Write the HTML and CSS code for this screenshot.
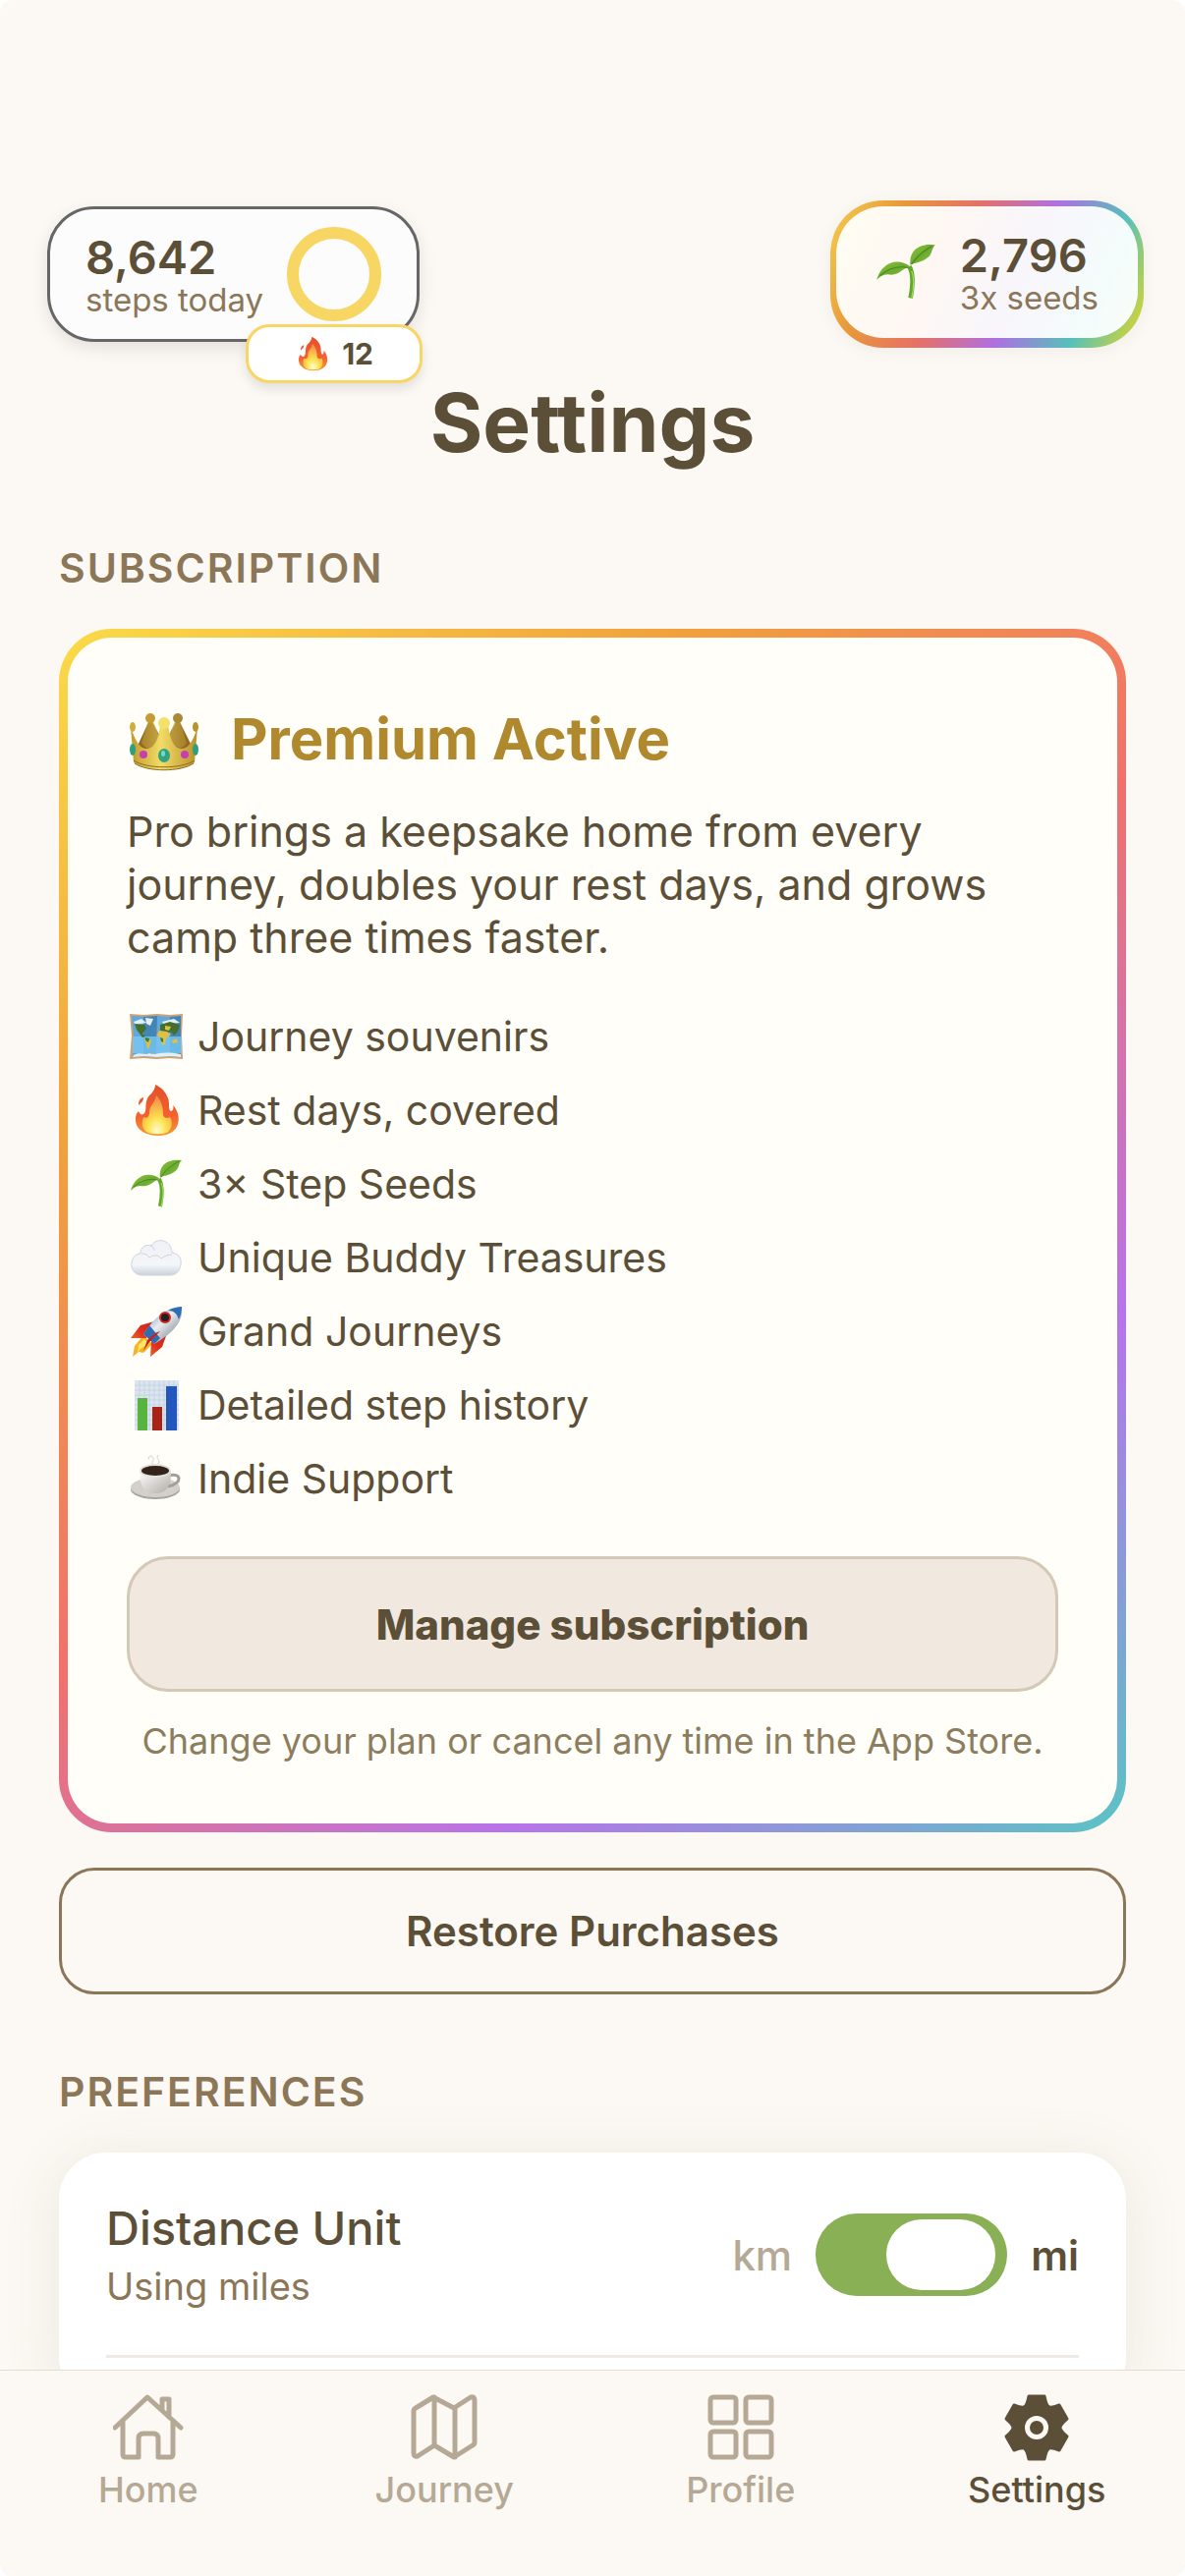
FILE: index.html
```html
<!DOCTYPE html>
<html lang="en">
<head>
    <meta charset="UTF-8">
    <meta name="viewport" content="width=device-width, initial-scale=1.0">
    <title>Settings</title>
    <link rel="stylesheet" href="styles.css">
</head>
<body>
    <!-- shared icons -->
    <svg class="icon-defs" aria-hidden="true">
        <defs>
            <linearGradient id="fireRed" x1="0" y1="0" x2="0" y2="1">
                <stop offset="0" stop-color="#e2502c"/>
                <stop offset="0.6" stop-color="#f4602f"/>
                <stop offset="1" stop-color="#f79a35"/>
            </linearGradient>
            <radialGradient id="fireCore" cx="0.5" cy="0.9" r="0.8">
                <stop offset="0" stop-color="#fffbd0"/>
                <stop offset="0.4" stop-color="#fde24e"/>
                <stop offset="1" stop-color="#f3924a"/>
            </radialGradient>
            <linearGradient id="leaf" x1="0" y1="0" x2="1" y2="1">
                <stop offset="0" stop-color="#8cc63c"/>
                <stop offset="0.5" stop-color="#6cab30"/>
                <stop offset="1" stop-color="#8fd148"/>
            </linearGradient>
            <linearGradient id="gold" x1="0" y1="0" x2="1" y2="0">
                <stop offset="0" stop-color="#c09a2e"/>
                <stop offset="0.45" stop-color="#f2dc66"/>
                <stop offset="1" stop-color="#b8902c"/>
            </linearGradient>
            <linearGradient id="cloudFill" x1="0" y1="0" x2="0" y2="1">
                <stop offset="0" stop-color="#eef1f5"/>
                <stop offset="0.7" stop-color="#f4f6f9"/>
                <stop offset="1" stop-color="#c9d1dc"/>
            </linearGradient>
            <linearGradient id="hull" x1="0" y1="0" x2="1" y2="1">
                <stop offset="0" stop-color="#3f7cc0"/>
                <stop offset="0.45" stop-color="#e9edf0"/>
                <stop offset="1" stop-color="#5a6672"/>
            </linearGradient>
            <linearGradient id="fin" x1="0" y1="1" x2="1" y2="0">
                <stop offset="0" stop-color="#f8a52c"/>
                <stop offset="0.5" stop-color="#e0301e"/>
                <stop offset="1" stop-color="#b81a14"/>
            </linearGradient>
            <linearGradient id="cup" x1="0" y1="0" x2="1" y2="1">
                <stop offset="0" stop-color="#ffffff"/>
                <stop offset="1" stop-color="#b0aca4"/>
            </linearGradient>
        </defs>

        <symbol id="fire" viewBox="0 0 54 54">
            <path fill="url(#fireRed)" d="M26 1C35 5 41 14 40 23c0 3 1 5 2 5 2 0 3-3 2-6 5 5 7 13 5 19-2 8-10 12-20 12S10 49 7 42C5 36 6 31 9 28c1 3 3 4 5 3 4-3 1-9 4-16 2-4 8-7 8-14z"/>
            <path fill="#e8552f" d="M9 22c0-4 1-7 5-8 0 4-2 5-5 8z"/>
            <path fill="url(#fireCore)" d="M27 12c6 6 7 13 7 20 1 3 4 4 7 2 3 5 2 12-2 15-3 3-18 3-22 0-5-4-5-10-3-15 3 2 6 0 6-4 0-8 6-11 7-18z"/>
        </symbol>

        <symbol id="seedling" viewBox="0 0 54 54">
            <path fill="none" stroke="#62a82b" stroke-width="4" d="M30 22c4 7 3 18 1 28"/>
            <path fill="none" stroke="#a2df62" stroke-width="1" d="M32 26c3 7 2 15 0 24"/>
            <path fill="url(#leaf)" d="M1 34C5 19 19 13 31 22 24 23 21 31 11 29 6 29 3 32 1 34z"/>
            <path fill="url(#leaf)" d="M31 21C29 7 40 1 53 3c-4 3-2 9-8 12-5 4-11 3-14 6z"/>
            <path fill="none" stroke="#4b8520" stroke-width="1" d="M4 30c7-6 15-9 25-7M32 20c5-8 11-12 18-16"/>
        </symbol>

        <symbol id="crown" viewBox="0 0 72 60">
            <path fill="#8f6a24" d="M9 34L22 6l14 26L50 6l14 28-8 14H15z"/>
            <path fill="url(#gold)" d="M2 15C8 33 13 37 18 37c8 0 13-10 14-25h8c2 16 6 25 14 25 6 0 11-6 16-22L67 51C57 61 15 61 5 51z"/>
            <path fill="url(#gold)" d="M20 8h5l6 17c-3 6-5 9-9 11-4 1-7-1-9-5zM47 8h5l7 23c-3 5-6 6-10 4-4-3-6-6-8-11z" opacity="0.55"/>
            <circle cx="22" cy="6" r="5" fill="#c49c34"/>
            <circle cx="50" cy="6" r="5" fill="#a8893a"/>
            <circle cx="36" cy="11" r="6" fill="#f4e168"/>
            <ellipse cx="4" cy="15" rx="3" ry="5" fill="#d0ad3e"/>
            <ellipse cx="68" cy="15" rx="3" ry="5" fill="#b8942f"/>
            <path fill="none" stroke="#8d6b22" stroke-width="1" d="M5 49c13 9 49 9 62 0M6 52c13 9 47 9 60 0"/>
            <ellipse cx="36" cy="44" rx="6" ry="7" fill="#2fa384"/>
            <ellipse cx="35" cy="42" rx="2" ry="3" fill="#7bd8ba"/>
            <circle cx="15" cy="43" r="4" fill="#c73fae"/>
            <circle cx="57" cy="43" r="4" fill="#c73fae"/>
            <ellipse cx="4" cy="38" rx="3" ry="6" fill="#2f9e7f"/>
            <ellipse cx="68" cy="38" rx="3" ry="6" fill="#2f9e7f"/>
        </symbol>

        <symbol id="worldmap" viewBox="0 0 54 54">
            <path fill="#c9a27c" d="M0 4l14 1 14-1 13 1 13-1-1 22 1 24-14-1-13 1-13-1-14 1 2-24z"/>
            <path fill="#5da9dd" d="M2 6l12 1v40L3 48l1-22zM28 6l13 1v40l-14 1z"/>
            <path fill="#4286b8" d="M14 7l14-1-1 42-13-1zM41 7l11-1v42l-11-1z"/>
            <path fill="#7ccaf5" d="M3 27h50v17H3z" opacity="0.75"/>
            <path fill="#e5eef3" d="M4 12l8-3 5 4-11 2zM16 8l8 1-3 7-4-2zM33 12l12-3 6 4-16 2zM4 46c6-4 10 0 16-2 8 2 12-3 32 1v3l-11-1-14 1-13-1-11 1z"/>
            <path fill="#466f2c" d="M5 14l10 1 2 4-4 5 3 3-3 1-6-8zM31 15l10-3 10 3-2 7-4 4-3-4-5 2-6-3z"/>
            <path fill="#dcc04a" d="M30 21l8 1 4 3-5 4-1 6-3 1-2-8-4-2zM17 28l5 3-2 7-2 2-1-6-2-3zM36 16l6 1-2 4-4-1zM43 31l5-2 1 4-5 1z"/>
            <path fill="#3e7d31" d="M16 28l4 1-1 4-3-2zM31 28l3 1v4l-2-1z"/>
        </symbol>

        <symbol id="cloud" viewBox="0 0 54 54">
            <path fill="url(#cloudFill)" stroke="#ccd4df" stroke-width="1" d="M13 45C5 45 1 39 2 32c1-6 5-9 9-9 0-7 6-10 11-8 4-8 20-8 21 7 7 1 10 6 9 12-1 7-5 11-11 11z"/>
            <path fill="none" stroke="#cdd5e0" stroke-width="1" d="M12 23c4 0 6 1 8 4 4-3 9-3 12 1 4-3 8-4 11-4M21 15c3 1 4 3 4 5"/>
        </symbol>

        <symbol id="rocket" viewBox="0 0 54 54">
            <path fill="#f6b32a" d="M14 31l9 9-9 9-5-1-6 5 2-11z"/>
            <path fill="#ffe667" d="M15 35l4 5-8 5-3 4 1-8z"/>
            <path fill="url(#fin)" d="M25 17l-14 4L1 34l16 0zM38 29l-5 14-12 10 1-16z"/>
            <path fill="url(#hull)" d="M53 2c2 13-6 25-28 38L14 30C25 12 39 2 53 2z"/>
            <path fill="#2f6cb2" d="M53 2c0 5-1 9-3 13-2-6-5-9-11-9 5-3 10-4 14-4zM20 21l11 13-6 6-11-10z"/>
            <circle cx="36" cy="13" r="6" fill="#d9231a"/>
            <circle cx="36" cy="13" r="4" fill="#1c2127"/>
            <path fill="#c8201a" d="M31 27L20 38l-6 9 4-11 8-7z"/>
        </symbol>

        <symbol id="chart" viewBox="0 0 54 54">
            <path fill="#dce5ee" d="M5 2h45v51H5z"/>
            <path fill="none" stroke="#c4d4e3" stroke-width="1" d="M5 7h45M5 12h45M5 17h45M5 22h45M5 27h45M5 32h45M5 37h45M5 42h45M5 47h45M10 2v51M15 2v51M20 2v51M25 2v51M30 2v51M35 2v51M40 2v51M45 2v51"/>
            <path fill="#57b53f" d="M8 20h10v33H8z"/>
            <path fill="#a92318" d="M23 29h10v24H23z"/>
            <path fill="#2457bd" d="M37 8h11v45H37z"/>
        </symbol>

        <symbol id="coffee" viewBox="0 0 54 54">
            <ellipse cx="26" cy="38" rx="25" ry="10" fill="#a9a5a0"/>
            <ellipse cx="26" cy="36" rx="25" ry="10" fill="#d3d0cb"/>
            <path fill="none" stroke="#a29e98" stroke-width="3" d="M40 24c12-4 15 8-1 11"/>
            <path fill="url(#cup)" d="M10 19c0 17 6 23 16 23s17-6 16-23z"/>
            <ellipse cx="26" cy="19" rx="16" ry="7" fill="#e4e2de"/>
            <ellipse cx="26" cy="19" rx="14" ry="5" fill="#35231a"/>
            <path fill="none" stroke="#d2d1cf" stroke-width="1" d="M24 13c-4-4 3-4-1-8M29 12c3-4-3-5 0-9M20 7c-3 0 0-3 3-3"/>
        </symbol>
    </svg>

    <div class="screen">
        <main class="content">
            <header class="top-bar">
                <div class="steps-card">
                    <div>
                        <div class="stat-value">8,642</div>
                        <div class="stat-label">steps today</div>
                    </div>
                    <div class="ring"></div>
                    <div class="streak">
                        <svg class="streak-icon"><use href="#fire"/></svg>
                        <span>12</span>
                    </div>
                </div>
                <div class="seeds-border">
                    <div class="seeds-card">
                        <svg class="seeds-icon"><use href="#seedling"/></svg>
                        <div>
                            <div class="stat-value">2,796</div>
                            <div class="stat-label">3x seeds</div>
                        </div>
                    </div>
                </div>
            </header>

            <h1>Settings</h1>

            <section>
                <h2>Subscription</h2>
                <div class="premium-border">
                    <div class="premium-card">
                        <h3><svg class="crown-icon"><use href="#crown"/></svg>Premium Active</h3>
                        <p class="premium-text">Pro brings a keepsake home from every journey, doubles your rest days, and grows camp three times faster.</p>
                        <ul class="perks">
                            <li><svg class="perk-icon"><use href="#worldmap"/></svg>Journey souvenirs</li>
                            <li><svg class="perk-icon"><use href="#fire"/></svg>Rest days, covered</li>
                            <li><svg class="perk-icon"><use href="#seedling"/></svg>3× Step Seeds</li>
                            <li><svg class="perk-icon"><use href="#cloud"/></svg>Unique Buddy Treasures</li>
                            <li><svg class="perk-icon"><use href="#rocket"/></svg>Grand Journeys</li>
                            <li><svg class="perk-icon"><use href="#chart"/></svg>Detailed step history</li>
                            <li><svg class="perk-icon"><use href="#coffee"/></svg>Indie Support</li>
                        </ul>
                        <button class="manage-btn" type="button">Manage subscription</button>
                        <p class="premium-note">Change your plan or cancel any time in the App Store.</p>
                    </div>
                </div>
                <button class="restore-btn" type="button">Restore Purchases</button>
            </section>

            <section>
                <h2>Preferences</h2>
                <div class="pref-card">
                    <div class="pref-row">
                        <div>
                            <label class="pref-name" for="unitSwitch">Distance Unit</label>
                            <div class="pref-hint">Using miles</div>
                        </div>
                        <div class="unit-toggle">
                            <span class="unit">km</span>
                            <input type="checkbox" class="switch" id="unitSwitch" checked>
                            <span class="unit active">mi</span>
                        </div>
                    </div>
                </div>
            </section>
        </main>

        <nav class="tab-bar">
            <a href="#">
                <svg class="tab-icon" viewBox="0 0 72 68">
                    <path d="M2 34L35 3l34 31M10 28v33q0 3 3 3h13V45q0-5 5-5h10q5 0 5 5v19h12q3 0 3-3V28M50 15V5h7v18"/>
                </svg>
                Home
            </a>
            <a href="#">
                <svg class="tab-icon" viewBox="-3 0 72 68">
                    <path d="M22 3L4 14q-2 1-2 3v43q0 4 4 3l17-11 20 12 19-12q2-1 2-3V6q0-4-4-3L43 14zM23 3v49M44 14v50"/>
                </svg>
                Journey
            </a>
            <a href="#">
                <svg class="tab-icon" viewBox="-3 0 72 68">
                    <rect x="2" y="3" width="26" height="26" rx="3"/>
                    <rect x="38" y="3" width="26" height="26" rx="3"/>
                    <rect x="2" y="38" width="26" height="26" rx="3"/>
                    <rect x="38" y="38" width="26" height="26" rx="3"/>
                </svg>
                Profile
            </a>
            <a href="#" class="active">
                <svg class="tab-icon" viewBox="-3 0 72 68">
                    <path class="gear" d="M25 2h16q2 10 5 11 2 1 10-2l8 14q-7 6-7 9t7 9l-8 14q-8-3-10-2-3 1-5 11H25q-2-10-5-11-2-1-10 2L2 43q7-6 7-9t-7-9l8-14q8 3 10 2 3-1 5-11z"/>
                    <circle class="gear-ring" cx="33" cy="34" r="9.5"/>
                </svg>
                Settings
            </a>
        </nav>
    </div>
</body>
</html>
```
FILE: styles.css
```css
* {
    box-sizing: border-box;
}
body {
    margin: 0;
    background-color: #fff;
    color: #5c4f38;
    font-family: Inter, Roboto, sans-serif;
}
h1, h2, h3, p, ul {
    margin: 0;
    padding: 0;
}
button {
    display: block;
    width: 100%;
    color: #5c4f38;
    font-family: inherit;
    font-size: 42px;
    cursor: pointer;
}
.icon-defs {
    position: absolute;
    width: 0;
    height: 0;
}
.screen {
    display: flex;
    flex-direction: column;
    height: 100vh;
    background-color: #fcf9f4;
    border-radius: 12px;
    overflow: hidden;
}
.content {
    flex: 1;
    min-height: 0;
    overflow: hidden;
    padding: 204px 60px 0;
}

/* top stats */
.top-bar {
    display: flex;
    justify-content: space-between;
    align-items: center;
    margin: 0 -18px 0 -12px;
}
.steps-card {
    position: relative;
    display: flex;
    align-items: center;
    gap: 24px;
    height: 138px;
    padding: 0 36px;
    background-color: #fcfcfc;
    border: 3px solid #666;
    border-radius: 48px;
    box-shadow: 0 6px 18px rgba(0, 0, 0, 0.1);
}
.stat-value {
    font-size: 47px;
    font-weight: 600;
    line-height: 52px;
}
.stat-label {
    color: #8b7658;
    font-size: 33px;
    line-height: 34px;
}
.ring {
    width: 96px;
    height: 96px;
    border: 12px solid #f8d664;
    border-radius: 50%;
}
.streak {
    position: absolute;
    right: -6px;
    bottom: -45px;
    display: flex;
    justify-content: center;
    align-items: center;
    gap: 12px;
    width: 180px;
    height: 60px;
    background-color: #fff;
    border: 3px solid #f8d664;
    border-radius: 24px;
    box-shadow: 0 6px 12px rgba(0, 0, 0, 0.1);
    font-size: 30px;
    font-weight: 700;
}
.streak-icon {
    width: 36px;
    height: 36px;
}
.seeds-border {
    padding: 6px 6px 10px;
    background: linear-gradient(114deg, #f3cf4e, #e8983a 20%, #e57068 40%, #b06fe0 60%, #56c0bc 80%, #c4d244 95%);
    border-radius: 54px;
    box-shadow: 0 3px 18px rgba(0, 0, 0, 0.05);
}
.seeds-card {
    display: flex;
    align-items: center;
    gap: 24px;
    height: 134px;
    padding: 0 40px;
    background: linear-gradient(114deg, #fffdf2, #fef7f3 35%, #f8f6fc 60%, #f4fcfb 85%, #fafdf6);
    border-radius: 48px;
}
.seeds-icon {
    width: 62px;
    height: 62px;
}

h1 {
    margin-top: 29px;
    font-size: 82px;
    font-weight: 700;
    line-height: 96px;
    text-align: center;
}
h2 {
    margin: 72px 0 35px;
    color: #8b7658;
    font-size: 41px;
    font-weight: 600;
    line-height: 54px;
    letter-spacing: 2px;
    text-transform: uppercase;
}

/* premium */
.premium-border {
    padding: 9px;
    background: linear-gradient(140deg, #fadb48, #f2a03c 25%, #f0716c 50%, #b873ea 75%, #5ac4c4);
    border-radius: 54px;
}
.premium-card {
    padding: 60px;
    background-color: #fffef9;
    border-radius: 45px;
}
h3 {
    display: flex;
    align-items: center;
    gap: 30px;
    margin-bottom: 24px;
    color: #b0882e;
    font-size: 58px;
    font-weight: 700;
    line-height: 86px;
}
.crown-icon {
    width: 76px;
    height: 60px;
    margin-top: 6px;
}
.premium-text {
    font-size: 43px;
    line-height: 54px;
}
.perks {
    margin: 36px 0 42px;
    list-style: none;
}
.perks li {
    display: flex;
    align-items: center;
    gap: 14px;
    height: 75px;
    padding-left: 2px;
    font-size: 41px;
}
.perk-icon {
    width: 56px;
    height: 54px;
}
.manage-btn {
    height: 138px;
    background-color: #f1e8df;
    border: 3px solid #d4c8b6;
    border-radius: 42px;
    font-weight: 800;
}
.premium-note {
    margin-top: 26px;
    color: #8b7d5e;
    font-size: 36px;
    line-height: 48px;
    text-align: center;
}
.restore-btn {
    height: 129px;
    margin-top: 36px;
    background: none;
    border: 3px solid #8b7658;
    border-radius: 36px;
    font-weight: 600;
}

/* preferences */
.pref-card {
    padding: 48px;
    background-color: #fff;
    border-radius: 48px;
    box-shadow: 0 6px 60px rgba(92, 79, 56, 0.1);
}
.pref-row {
    display: flex;
    justify-content: space-between;
    align-items: center;
    padding-bottom: 46px;
    border-bottom: 3px solid #eeebe7;
}
.pref-name {
    display: block;
    margin-bottom: 6px;
    font-size: 47px;
    font-weight: 500;
    line-height: 58px;
}
.pref-hint {
    color: #8b7658;
    font-size: 38px;
    line-height: 48px;
}
.unit-toggle {
    display: flex;
    align-items: center;
    gap: 24px;
}
.unit {
    color: #b5a996;
    font-size: 42px;
    font-weight: 500;
}
.unit.active {
    color: #5c4f38;
    font-weight: 600;
}
.switch {
    appearance: none;
    display: flex;
    justify-content: flex-start;
    width: 195px;
    height: 84px;
    margin: 0;
    padding: 6px 12px;
    background-color: #d4c8b6;
    border-radius: 42px;
    cursor: pointer;
}
.switch::before {
    content: "";
    width: 111px;
    height: 72px;
    background-color: #fff;
    border-radius: 36px;
}
.switch:checked {
    justify-content: flex-end;
    background-color: #89b055;
}

/* bottom tabs */
.tab-bar {
    display: grid;
    grid-template-columns: repeat(4, 1fr);
    height: 210px;
    padding-top: 24px;
    background-color: #fcf9f4;
    border-top: 1px solid #e4ddd0;
}
.tab-bar a {
    display: flex;
    flex-direction: column;
    align-items: center;
    gap: 7px;
    color: #b5a996;
    font-size: 36px;
    font-weight: 500;
    line-height: 44px;
    text-decoration: none;
}
.tab-bar a.active {
    color: #5c4f38;
}
.tab-icon {
    width: 72px;
    height: 68px;
    fill: none;
    stroke: currentColor;
    stroke-width: 5;
    stroke-linecap: round;
    stroke-linejoin: round;
}
.gear {
    fill: currentColor;
    stroke-width: 3;
}
.gear-ring {
    stroke: #fcf9f4;
}
```
